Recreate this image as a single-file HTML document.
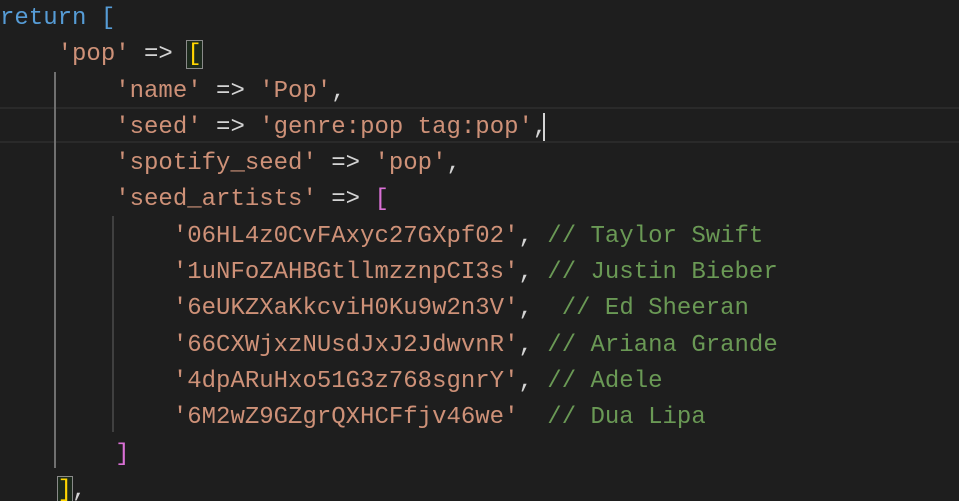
<!DOCTYPE html>
<html><head><style>
html,body{margin:0;padding:0;background:#1e1e1e;width:959px;height:501px;overflow:hidden;position:relative}
.code{position:absolute;left:0;top:1px;font-family:"Liberation Mono",monospace;font-size:24px;line-height:36.3px;color:#d4d4d4;white-space:pre}
.k{color:#569cd6}.s{color:#ce9178}.c{color:#6a9955}.y{color:#ffd700}.p{color:#da70d6}
.hl{position:absolute;left:0;right:0;top:107px;height:36px;border-top:2px solid #2a2a2a;border-bottom:2px solid #2a2a2a;box-sizing:border-box}
.g{position:absolute;width:2px}
.bx{outline:1px solid #8a8a8a;background:#1c2a1c}
.cur{position:absolute;left:543px;top:113px;width:2px;height:28px;background:#d4d4d4}
</style></head><body>
<div class="hl"></div>
<div class="g" style="left:54px;top:72px;height:396px;background:#707070"></div>
<div class="g" style="left:112px;top:216px;height:216px;background:#404040"></div>
<div class="code"><span class="k">return</span> <span class="k">[</span>
    <span class="s">'pop'</span> =&gt; <span class="y bx">[</span>
        <span class="s">'name'</span> =&gt; <span class="s">'Pop'</span>,
        <span class="s">'seed'</span> =&gt; <span class="s">'genre:pop tag:pop'</span>,
        <span class="s">'spotify_seed'</span> =&gt; <span class="s">'pop'</span>,
        <span class="s">'seed_artists'</span> =&gt; <span class="p">[</span>
            <span class="s">'06HL4z0CvFAxyc27GXpf02'</span>, <span class="c">// Taylor Swift</span>
            <span class="s">'1uNFoZAHBGtllmzznpCI3s'</span>, <span class="c">// Justin Bieber</span>
            <span class="s">'6eUKZXaKkcviH0Ku9w2n3V'</span>,  <span class="c">// Ed Sheeran</span>
            <span class="s">'66CXWjxzNUsdJxJ2JdwvnR'</span>, <span class="c">// Ariana Grande</span>
            <span class="s">'4dpARuHxo51G3z768sgnrY'</span>, <span class="c">// Adele</span>
            <span class="s">'6M2wZ9GZgrQXHCFfjv46we'</span>  <span class="c">// Dua Lipa</span>
        <span class="p">]</span>
    <span class="y bx">]</span>,</div>
<div class="cur"></div>
</body></html>
